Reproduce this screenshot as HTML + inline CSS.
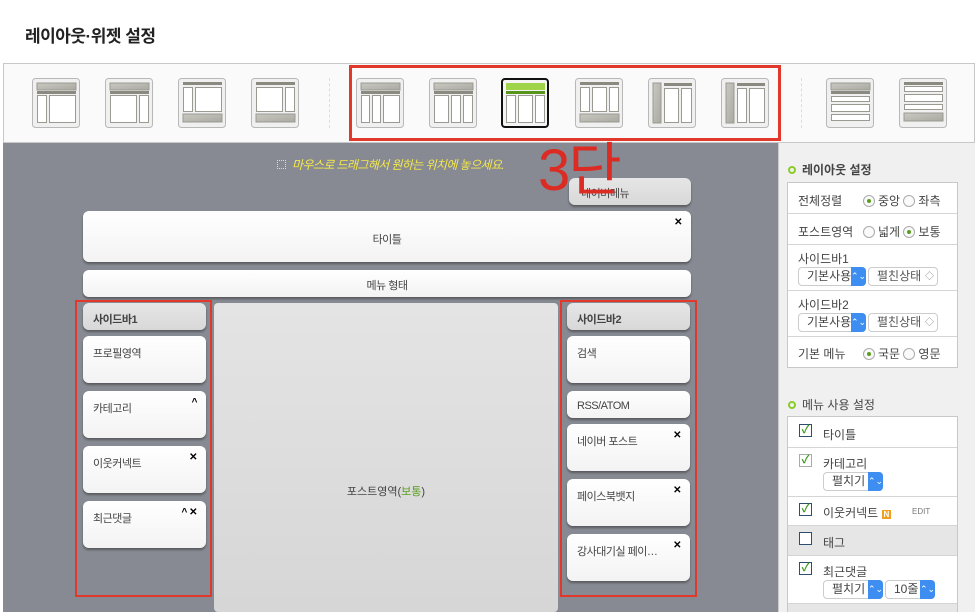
<!DOCTYPE html><html><head><meta charset="utf-8"><style>
*{margin:0;padding:0;box-sizing:border-box}
html{height:612px;overflow:hidden}
body{width:979px;height:612px;overflow:hidden;background:#fff;font-family:"Liberation Sans","Noto Sans CJK KR",sans-serif;position:relative;color:#333}
.a{position:absolute}
.w{position:absolute;background:linear-gradient(#fff,#f3f3f3);border-radius:6px;box-shadow:0 2px 2px rgba(0,0,0,.35);font-size:11px;color:#444;padding:9px 0 0 10px;letter-spacing:-.5px}
.h{background:linear-gradient(#e6e6e6,#d8d8d8);font-weight:bold;color:#444}
.x{position:absolute;right:9px;top:6px;font-size:10px;font-weight:bold;color:#000}
.tb{position:absolute;left:787px;width:171px;border:1px solid #c8c8c8;background:#fff;overflow:hidden}
.r{border-bottom:1px solid #d5d5d5;font-size:12px;color:#444;position:relative}
.r:last-child{border-bottom:0}
.rad{display:inline-block;width:12px;height:12px;border:1px solid #aaa;border-radius:50%;vertical-align:-2px;margin-right:3px;background:#fafafa;position:relative}
.rad.on:after{content:"";position:absolute;left:3px;top:3px;width:4px;height:4px;border-radius:50%;background:#5a9e1e}
.sel{position:absolute;height:19px;border:1px solid #ccc;border-radius:4px;background:#fff;font-size:12px;padding-left:8px;line-height:17px}
.sel b{position:absolute;right:-1px;top:-1px;width:15px;height:19px;background:#3d8ef0;border-radius:0 4px 4px 0;color:#fff;font-size:9px;text-align:center;line-height:19px;font-weight:normal}
.sel i{position:absolute;right:3px;top:0;font-style:normal;font-size:9px;color:#888}
.cb{position:absolute;left:11px;width:13px;height:13px;border:1px solid #2f4d70;background:#fff;color:#3c9a1c;font-size:11px;line-height:11px;text-align:center;font-weight:bold}
.dot{display:inline-block;width:8px;height:8px;border:2px solid #8ccc2a;border-radius:50%;margin-right:6px;vertical-align:0}
</style></head><body>
<div class="a" style="left:25px;top:22px;font-size:17px;font-weight:bold;color:#222;letter-spacing:-.5px">레이아웃·위젯 설정</div>
<div class="a" style="left:3px;top:63px;width:972px;height:80px;border:1px solid #c8c8c8;background:#fafafa"></div>
<div class="a" style="left:329px;top:78px;height:50px;border-left:1px dashed #ddd"></div>
<div class="a" style="left:801px;top:78px;height:50px;border-left:1px dashed #ddd"></div>
<svg class="a" style="left:0;top:0" width="979" height="145">
<defs>
<linearGradient id="g" x1="0" x2="1" y1="0" y2="1"><stop offset="0" stop-color="#c9c9c1"/><stop offset="1" stop-color="#a9a9a1"/></linearGradient>
<g id="bx"><rect x=".5" y=".5" width="47" height="49" rx="3" fill="#f0f0f0" stroke="#b8b8b8"/></g>
</defs>
<g fill="#fff" stroke="#9a9a92" stroke-width="1">
<g transform="translate(32,78)"><use href="#bx"/><rect x="5" y="5" width="39" height="7" fill="url(#g)"/><rect x="5" y="13" width="39" height="3" fill="#8a8a80" stroke="none"/><rect x="5.5" y="17.5" width="9" height="27"/><rect x="17.5" y="17.5" width="26" height="27"/></g>
<g transform="translate(105,78)"><use href="#bx"/><rect x="5" y="5" width="39" height="7" fill="url(#g)"/><rect x="5" y="13" width="39" height="3" fill="#8a8a80" stroke="none"/><rect x="5.5" y="17.5" width="26" height="27"/><rect x="34.5" y="17.5" width="9" height="27"/></g>
<g transform="translate(178,78)"><use href="#bx"/><rect x="5" y="4" width="39" height="3" fill="#8a8a80" stroke="none"/><rect x="5.5" y="9.5" width="9" height="24"/><rect x="17.5" y="9.5" width="26" height="24"/><rect x="5" y="36" width="39" height="8" fill="url(#g)"/></g>
<g transform="translate(251,78)"><use href="#bx"/><rect x="5" y="4" width="39" height="3" fill="#8a8a80" stroke="none"/><rect x="5.5" y="9.5" width="26" height="24"/><rect x="34.5" y="9.5" width="9" height="24"/><rect x="5" y="36" width="39" height="8" fill="url(#g)"/></g>
<g transform="translate(356,78)"><use href="#bx"/><rect x="5" y="5" width="39" height="7" fill="url(#g)"/><rect x="5" y="13" width="39" height="3" fill="#8a8a80" stroke="none"/><rect x="5.5" y="17.5" width="8" height="27"/><rect x="16.5" y="17.5" width="8" height="27"/><rect x="27.5" y="17.5" width="16" height="27"/></g>
<g transform="translate(429,78)"><use href="#bx"/><rect x="5" y="5" width="39" height="7" fill="url(#g)"/><rect x="5" y="13" width="39" height="3" fill="#8a8a80" stroke="none"/><rect x="5.5" y="17.5" width="14" height="27"/><rect x="22.5" y="17.5" width="9" height="27"/><rect x="34.5" y="17.5" width="9" height="27"/></g>
<g transform="translate(501,78)"><rect x="1" y="1" width="46" height="48" rx="3" fill="#f4f4f4" stroke="#111" stroke-width="2"/><rect x="5" y="5" width="39" height="7" fill="#9fd34a" stroke="none"/><rect x="5" y="13" width="39" height="3" fill="#57961a" stroke="none"/><rect x="5.5" y="17.5" width="9" height="27"/><rect x="17.5" y="17.5" width="14" height="27"/><rect x="34.5" y="17.5" width="9" height="27"/></g>
<g transform="translate(575,78)"><use href="#bx"/><rect x="5" y="4" width="39" height="3" fill="#8a8a80" stroke="none"/><rect x="5.5" y="9.5" width="9" height="24"/><rect x="17.5" y="9.5" width="14" height="24"/><rect x="34.5" y="9.5" width="9" height="24"/><rect x="5" y="36" width="39" height="8" fill="url(#g)"/></g>
<g transform="translate(648,78)"><use href="#bx"/><rect x="5" y="5" width="8" height="40" fill="url(#g)"/><rect x="16" y="5" width="28" height="3" fill="#8a8a80" stroke="none"/><rect x="16.5" y="10.5" width="14" height="34"/><rect x="33.5" y="10.5" width="10" height="34"/></g>
<g transform="translate(721,78)"><use href="#bx"/><rect x="5" y="5" width="8" height="40" fill="url(#g)"/><rect x="16" y="5" width="28" height="3" fill="#8a8a80" stroke="none"/><rect x="16.5" y="10.5" width="9" height="34"/><rect x="28.5" y="10.5" width="15" height="34"/></g>
<g transform="translate(826,78)"><use href="#bx"/><rect x="5" y="5" width="39" height="7" fill="url(#g)"/><rect x="5" y="13" width="39" height="3" fill="#8a8a80" stroke="none"/><rect x="5.5" y="18.5" width="38" height="5"/><rect x="5.5" y="26.5" width="38" height="7"/><rect x="5.5" y="36.5" width="38" height="6"/></g>
<g transform="translate(899,78)"><use href="#bx"/><rect x="5" y="4" width="39" height="3" fill="#8a8a80" stroke="none"/><rect x="5.5" y="8.5" width="38" height="5"/><rect x="5.5" y="16.5" width="38" height="7"/><rect x="5.5" y="26.5" width="38" height="5"/><rect x="5" y="35" width="39" height="8" fill="url(#g)"/></g>
</g></svg>
<div class="a" style="left:349px;top:65px;width:432px;height:76px;border:3px solid #e2372b"></div>
<div class="a" style="left:3px;top:143px;width:775px;height:469px;background:#878a92"></div>
<div class="a" style="left:778px;top:143px;width:197px;height:469px;background:#f0f0f0;border-left:1px solid #ccc"></div>
<div class="a" style="left:277px;top:156px;font-size:12px;color:#f4e84a;font-style:italic;letter-spacing:-.6px"><span style="display:inline-block;width:9px;height:9px;border:1px dotted #f4e84a;margin-right:6px"></span>마우스로 드래그해서 원하는 위치에 놓으세요.</div>
<div class="w h" style="left:569px;top:178px;width:122px;height:27px;font-weight:normal;padding:7px 0 0 12px">네이버메뉴</div>
<div class="a" style="left:538px;top:136px;font-size:58px;color:#dc2b22;line-height:70px;letter-spacing:-2px">3단</div>
<div class="w" style="left:83px;top:211px;width:608px;height:51px;text-align:center;padding:20px 0 0">타이틀<span class="x">✕</span></div>
<div class="w" style="left:83px;top:270px;width:608px;height:27px;text-align:center;padding:7px 0 0">메뉴 형태</div>
<div class="a" style="left:214px;top:303px;width:344px;height:309px;background:linear-gradient(#e4e4e4,#d6d6d6);border-radius:4px;font-size:11px;text-align:center;padding-top:180px;color:#444">포스트영역(<span style="color:#5a9e1e">보통</span>)</div>
<div class="a" style="left:75px;top:300px;width:137px;height:297px;border:2px solid #e2372b"></div>
<div class="a" style="left:560px;top:300px;width:137px;height:297px;border:2px solid #e2372b"></div>
<div class="w h" style="left:83px;top:303px;width:123px;height:27px;padding-top:8px">사이드바1</div>
<div class="w" style="left:83px;top:336px;width:123px;height:47px">프로필영역</div>
<div class="w" style="left:83px;top:391px;width:123px;height:47px">카테고리<span class="x">^</span></div>
<div class="w" style="left:83px;top:446px;width:123px;height:47px">이웃커넥트<span class="x">✕</span></div>
<div class="w" style="left:83px;top:501px;width:123px;height:47px">최근댓글<span class="x">^ ✕</span></div>
<div class="w h" style="left:567px;top:303px;width:123px;height:27px;padding-top:8px">사이드바2</div>
<div class="w" style="left:567px;top:336px;width:123px;height:47px">검색</div>
<div class="w" style="left:567px;top:391px;width:123px;height:27px;padding-top:9px">RSS/ATOM</div>
<div class="w" style="left:567px;top:424px;width:123px;height:47px">네이버 포스트<span class="x">✕</span></div>
<div class="w" style="left:567px;top:479px;width:123px;height:47px">페이스북뱃지<span class="x">✕</span></div>
<div class="w" style="left:567px;top:534px;width:123px;height:47px">강사대기실 페이…<span class="x">✕</span></div>
<div class="a" style="left:788px;top:161px;font-size:12px;font-weight:bold;color:#444"><span class="dot"></span>레이아웃 설정</div>
<div class="tb" style="top:182px">
<div class="r" style="height:31px;padding:9px 0 0 10px">전체정렬<span class="a" style="left:75px;top:9px"><span class="rad on"></span>중앙 <span class="rad"></span>좌측</span></div>
<div class="r" style="height:31px;padding:9px 0 0 10px">포스트영역<span class="a" style="left:75px;top:9px"><span class="rad"></span>넓게 <span class="rad on"></span>보통</span></div>
<div class="r" style="height:46px;padding:5px 0 0 10px">사이드바1<div class="sel" style="left:10px;top:22px;width:68px">기본사용<b>⌃⌄</b></div><div class="sel" style="left:80px;top:22px;width:70px;color:#555">펼친상태<i>◇</i></div></div>
<div class="r" style="height:46px;padding:5px 0 0 10px">사이드바2<div class="sel" style="left:10px;top:22px;width:68px">기본사용<b>⌃⌄</b></div><div class="sel" style="left:80px;top:22px;width:70px;color:#555">펼친상태<i>◇</i></div></div>
<div class="r" style="height:30px;padding:8px 0 0 10px">기본 메뉴<span class="a" style="left:75px;top:8px"><span class="rad on"></span>국문 <span class="rad"></span>영문</span></div>
</div>
<div class="a" style="left:788px;top:396px;font-size:12px;color:#444"><span class="dot"></span>메뉴 사용 설정</div>
<div class="tb" style="top:416px;height:196px;border-bottom:0">
<div class="r" style="height:31px;padding:9px 0 0 35px"><span class="cb" style="top:7px">✓</span>타이틀</div>
<div class="r" style="height:49px;padding:7px 0 0 35px"><span class="cb" style="top:6px;border-color:#aaa">✓</span>카테고리<div class="sel" style="left:35px;top:24px;width:60px">펼치기<b>⌃⌄</b></div></div>
<div class="r" style="height:29px;padding:7px 0 0 35px"><span class="cb" style="top:6px">✓</span>이웃커넥트 <span style="display:inline-block;background:#f0a020;color:#fff;font-size:8px;padding:0 2px;font-weight:bold">N</span><span class="a" style="left:124px;top:10px;font-size:8px;color:#777">EDIT</span></div>
<div class="r" style="height:30px;padding:8px 0 0 35px;background:#e6e6e6"><span class="cb" style="top:6px"></span>태그</div>
<div class="r" style="height:48px;padding:7px 0 0 35px"><span class="cb" style="top:6px">✓</span>최근댓글<div class="sel" style="left:35px;top:24px;width:60px">펼치기<b>⌃⌄</b></div><div class="sel" style="left:97px;top:24px;width:50px">10줄<b>⌃⌄</b></div></div>
<div class="r" style="height:20px;background:#e6e6e6"></div>
</div>
</body></html>
